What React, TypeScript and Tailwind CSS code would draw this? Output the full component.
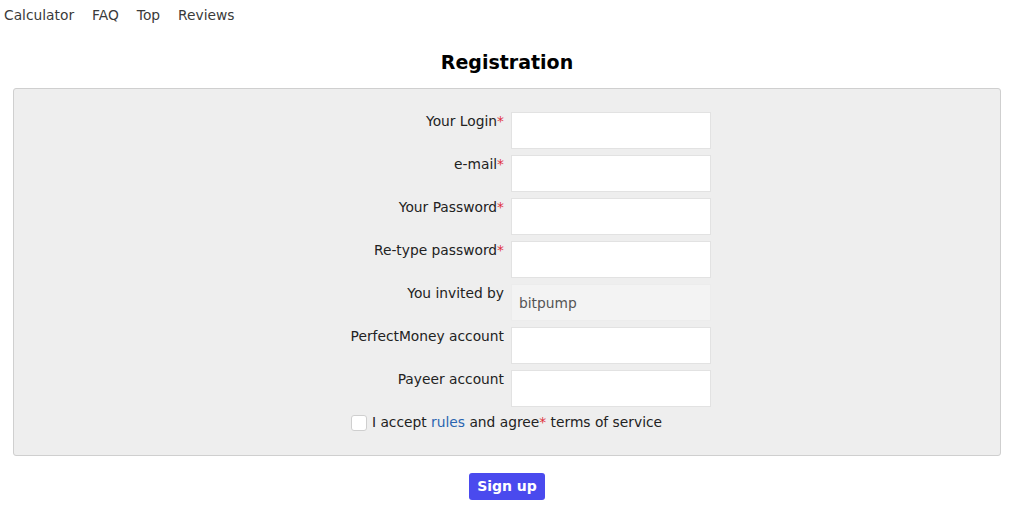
const rows = [
  { label: "Your Login", required: true },
  { label: "e-mail", required: true },
  { label: "Your Password", required: true, type: "password" },
  { label: "Re-type password", required: true, type: "password" },
  { label: "You invited by", value: "bitpump", disabled: true },
  { label: "PerfectMoney account" },
  { label: "Payeer account" },
];

const Star = () => <span className="text-[#e0303a]">*</span>;

export default function App() {
  return (
    <div className="min-h-[521px] bg-white text-[13.8px] leading-[19px] text-[#222] font-['DejaVu_Sans',Verdana,sans-serif]">
      <nav className="flex items-center gap-[18px] pl-[4px] h-[31px] text-[#3a3a3a]">
        <a href="#">Calculator</a>
        <a href="#">FAQ</a>
        <a href="#">Top</a>
        <a href="#">Reviews</a>
      </nav>

      <div className="pl-[13px] pr-[23px]">
        <h1 className="mt-[19px] mb-[14px] text-center text-[19px] leading-6 font-bold text-black">Registration</h1>

        <form className="border border-[#cfcfcf] rounded-[3px] bg-[#eeeeee] pt-[23px] pb-[23px]">
          <div className="flex flex-col gap-[6px]">
            {rows.map((r) => (
              <div key={r.label} className="flex items-start">
                <label className="w-[497px] pr-[7px] text-right">
                  {r.label}
                  {r.required && <Star />}
                </label>
                <input
                  type={r.type ?? "text"}
                  defaultValue={r.value}
                  disabled={r.disabled}
                  className={
                    r.disabled
                      ? "w-[200px] h-[37px] px-[7px] bg-[#f3f3f3] border border-[#ececec] text-[#555] outline-none"
                      : "w-[200px] h-[37px] px-[7px] bg-white border border-[#e2e2e2] outline-none"
                  }
                />
              </div>
            ))}
          </div>
          <div className="flex items-center justify-center gap-[5px] mt-[6px] pr-[1px]">
            <span className="w-[16px] h-[16px] rounded-[3px] bg-white border border-[#cfcfcf]" />
            <span>
              I accept <a href="#" className="text-[#2a64b0]">rules</a> and agree<Star /> terms of service
            </span>
          </div>
        </form>

        <div className="flex justify-center mt-[17px]">
          <button className="w-[76px] h-[27px] rounded-[3px] bg-[#4a4aee] text-white font-bold text-[14px]">Sign up</button>
        </div>
      </div>
    </div>
  );
}
